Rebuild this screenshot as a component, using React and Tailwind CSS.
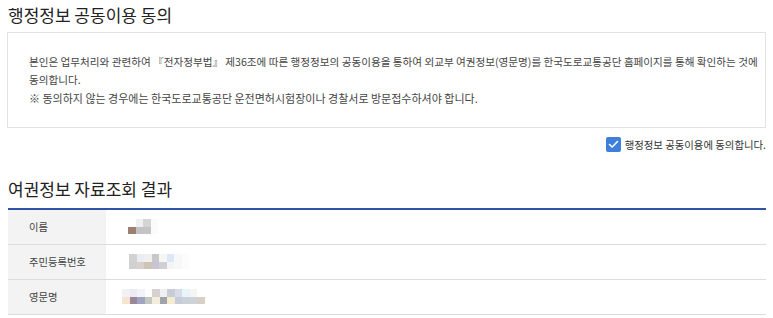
import React, { useState } from 'react'

const font = { fontFamily: '"Noto Sans CJK KR", "Noto Sans", sans-serif' }

// 모자이크 처리된 개인정보 값
const Mosaic = ({ rows }) => (
    <div className="flex flex-col">
        {rows.map((row, i) => (
            <div key={i} className="flex">
                {row.map((c, j) => (
                    <div key={j} className="w-[7.5px] h-[7.5px]" style={{ backgroundColor: c }} />
                ))}
            </div>
        ))}
    </div>
)

const results = [
    {
        label: "이름",
        pad: "pl-[22px]",
        rows: [
            ["#ffffff", "#eef0f2", "#d4d4d4", "#fbfbfb"],
            ["#9c8070", "#c2c2c4", "#c4c4c4", "#fbfbfb"],
        ],
    },
    {
        label: "주민등록번호",
        pad: "pl-[23px]",
        rows: [
            ["#d2d2d2", "#e8eef2", "#f0f0f0", "#c8c8c8", "#f6f6f6", "#dce8f8", "#f8f8f8", "#fcfcfc"],
            ["#d0d0d0", "#d8d0cc", "#cfc4b6", "#c8c4d4", "#d0d0d2", "#f4f4f4", "#f8f8f8", "#fcfcfc"],
        ],
    },
    {
        label: "영문명",
        pad: "pl-[16px]",
        rows: [
            ["#f2f2f6", "#eceaf4", "#f0f4f8", "#fcfcfc", "#d8d0d0", "#f0f0f4", "#c8ccd4", "#d8dce8", "#e8f4fc", "#f8f4f0", "#ffffff"],
            ["#f4e4d0", "#9a8898", "#a0a4c0", "#c0c8c0", "#f4ecdc", "#a0a4a8", "#f4ecd0", "#c8ccd8", "#ccd0d8", "#ccd4d8", "#d8d0c8"],
        ],
    },
]

const App = () => {
    const [agree, setAgree] = useState(true)

    return (
        <div className="w-[773px] h-[318px] bg-white overflow-hidden px-[7px] pt-[4px]" style={font}>
            <h2 className="text-[17px] leading-[22px] text-[#222] font-normal pl-[1px]">행정정보 공동이용 동의</h2>

            <div className="mt-[6px] w-[759px] border border-[#e2e2e2] pl-[21px] pr-[2px] py-[20px] text-[10.6px] leading-[18px] text-[#444] break-keep">
                <p>
                    <span className="whitespace-nowrap">본인은 업무처리와 관련하여 『전자정부법』 제36조에 따른 행정정보의 공동이용을 통하여 외교부 여권정보(영문명)를 한국도로교통공단 홈페이지를 통해 확인하는 것에</span>
                    <br />
                    동의합니다.
                </p>
                <p className="text-[11px]">※ 동의하지 않는 경우에는 한국도로교통공단 운전면허시험장이나 경찰서로 방문접수하셔야 합니다.</p>
            </div>

            <label className="mt-[9px] w-[759px] flex justify-end items-center gap-[4px] cursor-pointer">
                <button
                    onClick={() => setAgree(!agree)}
                    className={`w-[15px] h-[15px] rounded-[2px] flex items-center justify-center ${agree ? "bg-[#3d7fdb]" : "bg-white border border-[#bbb]"}`}
                >
                    {agree && (
                        <svg width="11" height="9" viewBox="0 0 11 9" fill="none">
                            <path d="M1.5 4.5L4.2 7L9.5 1.5" stroke="white" strokeWidth="1.6" strokeLinecap="round" strokeLinejoin="round" />
                        </svg>
                    )}
                </button>
                <span className="text-[10.4px] leading-[15px] text-[#333]">행정정보 공동이용에 동의합니다.</span>
            </label>

            <h2 className="mt-[26px] text-[17px] leading-[22px] text-[#222] font-normal pl-[1px]">여권정보 자료조회 결과</h2>

            <table className="mt-[8px] w-[758px] ml-[1px] border-t-2 border-[#2f53a5] border-collapse">
                <tbody>
                    {results.map((r) => (
                        <tr key={r.label} className="h-[35px] border-b border-[#dcdcdc]">
                            <th className="w-[98px] bg-[#f3f3f3] text-left font-normal text-[10.3px] text-[#444] pl-[21px]">{r.label}</th>
                            <td className={r.pad}>
                                <Mosaic rows={r.rows} />
                            </td>
                        </tr>
                    ))}
                </tbody>
            </table>
        </div>
    )
}

export default App
